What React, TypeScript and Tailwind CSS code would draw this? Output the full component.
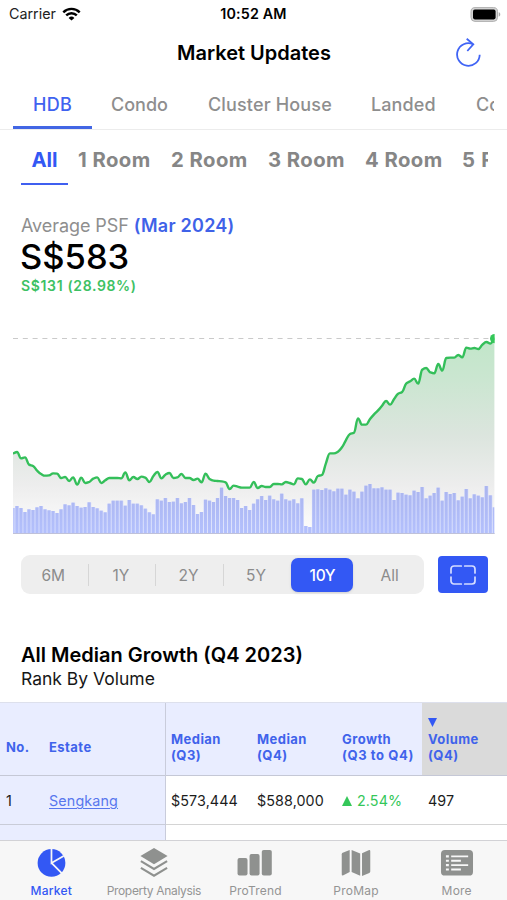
import React from "react";

// Chart samples are stored in thirds of a pixel, measured from the chart's top edge.
const PRICE = [
  400, 396, 415, 412, 434, 438, 452, 462, 467, 466, 460, 461, 474, 471, 483, 472, 494, 473, 489, 486, 476, 472, 489, 481,
  474, 474, 474, 475, 457, 481, 471, 477, 470, 473, 486, 468, 456, 475, 464, 459, 474, 472, 462, 474, 474, 480, 476, 487,
  461, 477, 482, 483, 484, 487, 507, 497, 500, 503, 503, 503, 486, 504, 498, 501, 501, 492, 492, 493, 486, 489, 493, 475,
  477, 493, 478, 488, 468, 465, 430, 400, 400, 395, 382, 360, 342, 338, 295, 314, 314, 297, 283, 271, 257, 243, 254, 237,
  221, 216, 191, 184, 176, 191, 149, 144, 157, 160, 132, 152, 114, 113, 113, 105, 112, 83, 86, 84, 87, 74, 66, 71, 56,
];
const VOLUME = [
  564, 558, 564, 576, 568, 570, 562, 558, 568, 571, 573, 579, 568, 553, 556, 548, 558, 563, 561, 547, 561, 565, 572, 577,
  551, 542, 542, 542, 557, 540, 551, 551, 556, 566, 577, 583, 538, 542, 534, 546, 545, 534, 550, 546, 534, 555, 582, 576,
  539, 542, 546, 534, 503, 528, 534, 534, 540, 564, 558, 570, 551, 538, 528, 540, 527, 538, 542, 521, 538, 542, 538, 550,
  535, 618, 621, 509, 508, 510, 505, 509, 514, 506, 506, 524, 509, 515, 535, 515, 497, 492, 505, 505, 502, 509, 509, 540,
  518, 519, 524, 526, 512, 516, 501, 535, 527, 519, 503, 542, 516, 522, 519, 541, 530, 507, 535, 523, 527, 532, 498, 526,
  562,
];
const STEP = 481.4 / 120;
const BASE = 213.7;

function smoothPath(values: number[]) {
  const y = values.map((v) => v / 3);
  const slope = y.map((_, i) => {
    if (i === 0 || i === y.length - 1) return 0;
    const a = y[i] - y[i - 1];
    const b = y[i + 1] - y[i];
    return a * b <= 0 ? 0 : (2 * a * b) / (a + b);
  });
  const k = 0.42;
  let d = `M0 ${y[0].toFixed(2)}`;
  for (let i = 1; i < y.length; i++) {
    const x0 = (i - 1) * STEP;
    const x1 = i * STEP;
    d += `C${(x0 + STEP * k).toFixed(2)} ${(y[i - 1] + slope[i - 1] * k).toFixed(2)} ${(x1 - STEP * k).toFixed(2)} ${(y[i] - slope[i] * k).toFixed(2)} ${x1.toFixed(2)} ${y[i].toFixed(2)}`;
  }
  return d;
}

function Chart() {
  const line = smoothPath(PRICE);
  return (
    <svg className="ml-[13px] block h-[220px] w-[482px] shrink-0" viewBox="0 0 482 220">
      <defs>
        <linearGradient id="area" x1="0" y1="18" x2="0" y2="214" gradientUnits="userSpaceOnUse">
          <stop offset="0" stopColor="#c1e6c9" />
          <stop offset="0.2" stopColor="#cae6d0" />
          <stop offset="0.5" stopColor="#dce5de" />
          <stop offset="0.75" stopColor="#ededed" />
          <stop offset="1" stopColor="#fdfdfd" />
        </linearGradient>
        <linearGradient id="bars" x1="0" y1="165" x2="0" y2="214" gradientUnits="userSpaceOnUse">
          <stop offset="0" stopColor="#abb5ee" />
          <stop offset="1" stopColor="#b3c0fd" />
        </linearGradient>
      </defs>
      <path d={`${line}L481.4 ${BASE}L0 ${BASE}Z`} fill="url(#area)" />
      <line x1="0" y1="18.5" x2="476" y2="18.5" stroke="#cacaca" strokeWidth="1" strokeDasharray="5 4.8" />
      {VOLUME.map((v, i) => {
        const left = Math.max(0, i * STEP - 2);
        const right = Math.min(481.6, i * STEP + 2);
        return (
          <g key={i}>
            <rect x={left} y={v / 3} width={right - left} height={BASE - v / 3} fill="#d4dbfd" />
            <rect x={left + 0.4} y={v / 3} width={right - left - 1} height={BASE - v / 3} fill="url(#bars)" />
          </g>
        );
      })}
      <line x1="0" y1="213.5" x2="481.6" y2="213.5" stroke="#bfc1d9" />
      <path d={line} fill="none" stroke="#34bf5a" strokeWidth="2.4" strokeLinejoin="round" />
      <path d="M481.6 14a4.6 4.6 0 0 0 0 9.2z" fill="#34c759" />
    </svg>
  );
}

function StatusBar() {
  return (
    <div className="grid h-[28px] shrink-0 grid-cols-[1fr_auto_1fr] items-center pl-[9px] pr-[6px] text-[14.3px]">
      <div className="flex items-center gap-[6px] text-[#222]">
        <span>Carrier</span>
        <svg className="h-[14px] w-[19px]" viewBox="0 0 19 14" fill="none" stroke="#000" strokeWidth="2.4">
          <path d="M1.3 5.3a11.6 11.6 0 0 1 16.4 0" />
          <path d="M4.2 8.4a7.5 7.5 0 0 1 10.6 0" />
          <path d="M9.5 13.6 6.6 10.9a4.1 4.1 0 0 1 5.8 0z" fill="#000" stroke="none" />
        </svg>
      </div>
      <div className="pr-[3px] text-center font-semibold tracking-[0.15px] whitespace-nowrap">10:52 AM</div>
      <svg className="h-[15px] w-[31px] justify-self-end" viewBox="0 0 31 15">
        <rect x="1" y="0.6" width="26.5" height="13.8" rx="4" fill="#d4d4d4" stroke="#b0b0b0" />
        <rect x="3" y="2.6" width="22.6" height="9.8" rx="1.8" fill="#000" />
        <path d="M28.7 5.3c2.1.5 2.1 3.9 0 4.4z" fill="#aaa" />
      </svg>
    </div>
  );
}

const RANGES = ["6M", "1Y", "2Y", "5Y", "10Y", "All"];

function RangePicker() {
  return (
    <div className="flex shrink-0 items-center pl-[21px]">
      <div className="flex h-[39px] w-[403px] items-center rounded-[9px] bg-[#eeeeee] text-[15.5px] text-[#8b8b8b]">
        {RANGES.map((r, i) => (
          <div
            key={r}
            className={
              i === 4
                ? "mr-[4px] ml-px flex h-[34px] w-[62px] items-center justify-center rounded-[7px] bg-[#3358f4] pt-[2px] font-medium tracking-[-0.4px] text-white shadow-sm"
                : "flex h-[22px] flex-1 items-center justify-center pt-[2px] pr-[2px] " + (i < 3 ? "border-r border-[#d6d6d6]" : "")
            }
          >
            {r}
          </div>
        ))}
      </div>
      <div className="ml-[14px] flex h-[37px] w-[50px] items-center justify-center rounded-[4px] bg-[#3358f4]">
        <svg className="h-[20px] w-[26px]" viewBox="0 0 26 20" fill="none" stroke="#d5dcff" strokeWidth="1.7" strokeLinecap="round">
          <path d="M1 8V4a3 3 0 0 1 3-3h7.3M14.7 1H22a3 3 0 0 1 3 3v4M25 12v4a3 3 0 0 1-3 3h-7.3M11.3 19H4a3 3 0 0 1-3-3v-4" />
        </svg>
      </div>
    </div>
  );
}

function GrowthTable() {
  const head =
    "flex h-[72px] flex-col justify-center text-[13px] leading-[16px] font-bold tracking-[0.45px] text-[#4063eb] whitespace-nowrap";
  return (
    <div className="mt-[12px] flex h-[138px] shrink-0 overflow-hidden border-t border-[#dde0ec] text-[14.3px] text-[#1c1c1c]">
      <div className="flex h-full w-[166px] flex-col border-r border-[#c9ccdb] bg-[#e9edff]">
        <div className="flex h-[73px] shrink-0 items-center border-b border-[#c5c8d6] pt-[17px] text-[13px] font-bold tracking-[0.45px] text-[#4063eb]">
          <span className="w-[49px] pl-[6px]">No.</span>
          <span>Estate</span>
        </div>
        <div className="flex h-[49px] shrink-0 items-center border-b border-[#c9ccd8] pt-[2px]">
          <span className="w-[49px] pl-[6px]">1</span>
          <span className="tracking-[0.15px] text-[#5877ee] underline underline-offset-2">Sengkang</span>
        </div>
      </div>
      <div className="flex flex-1 flex-col">
        <div className="grid shrink-0 grid-cols-[86px_85px_85px_1fr] border-b border-[#c5c8d6] bg-[#e9edff]">
          <div className={head + " pt-[15px] pl-[5px]"}>
            <span>Median</span>
            <span>(Q3)</span>
          </div>
          <div className={head + " pt-[15px] pl-[5px]"}>
            <span>Median</span>
            <span>(Q4)</span>
          </div>
          <div className={head + " pt-[15px] pl-[5px]"}>
            <span>Growth</span>
            <span className="tracking-[0.6px]">(Q3 to Q4)</span>
          </div>
          <div className={head + " bg-[#dadada] pt-[2px] pl-[6px]"}>
            <svg className="mb-[4px] h-[9px] w-[9px]" viewBox="0 0 9 9">
              <path d="M0 0h9L4.5 9z" fill="#3358f4" />
            </svg>
            <span>Volume</span>
            <span>(Q4)</span>
          </div>
        </div>
        <div className="grid h-[49px] shrink-0 grid-cols-[86px_85px_85px_1fr] items-center border-b border-[#d4d4d4] pt-[2px] tracking-[0.1px] *:pl-[5px]">
          <span>$573,444</span>
          <span>$588,000</span>
          <span className="flex items-center gap-[5px] text-[#34c759]">
            <svg className="h-[10px] w-[10px]" viewBox="0 0 10 10">
              <path d="M5 0l5 10H0z" fill="#34c759" />
            </svg>
            2.54%
          </span>
          <span className="ml-px">497</span>
        </div>
      </div>
    </div>
  );
}

function TabBar() {
  const item = "flex flex-1 flex-col items-center whitespace-nowrap";
  return (
    <nav className="flex h-[60px] shrink-0 border-t border-[#d2d2d6] bg-[#f7f7f7] pt-[5px] text-[12px] text-[#949494]">
      <div className={item + " pl-px text-[#3358f4]"}>
        <svg className="h-[34px] w-[36px]" viewBox="0 0 36 34">
          <circle cx="18.5" cy="17.5" r="14.3" fill="#3358f4" />
          <path d="M18.5 2.5v15L31 10.3M18.5 17.5 29 28" fill="none" stroke="#f7f7f7" strokeWidth="1.8" />
        </svg>
        <span className="mt-[3px] font-medium tracking-[0.2px]">Market</span>
      </div>
      <div className={item + " pl-[2px]"}>
        <svg className="h-[34px] w-[32px]" viewBox="0 0 32 34" fill="none" stroke="#8f918f" strokeWidth="2.2">
          <path d="M16 2 30 10.3 16 18.8 2 10.3z" fill="#8f918f" stroke="none" />
          <path d="m2.5 15.6 13.5 8 13.5-8M2.5 22.6l13.5 8 13.5-8" />
        </svg>
        <span className="mt-[3px] tracking-[-0.32px]">Property Analysis</span>
      </div>
      <div className={item + " pl-px"}>
        <svg className="h-[34px] w-[36px]" viewBox="0.8 0 36 34" fill="#8f918f">
          <rect x="0.8" y="12.3" width="10.3" height="18" rx="2" />
          <rect x="13.2" y="8.3" width="10.3" height="22" rx="2" />
          <rect x="25.8" y="4" width="10.3" height="26.3" rx="2" />
        </svg>
        <span className="mt-[3px] tracking-[0.2px]">ProTrend</span>
      </div>
      <div className={item}>
        <svg className="h-[34px] w-[30px]" viewBox="0 0 30 34" fill="#8f918f">
          <path d="M0.3 8.5Q.3 7.4 1.3 7L8.5 4.2v22.6L2 30.2Q.3 30.8.3 29z" />
          <path d="m10.5 4 8.8 3.6v23l-8.8-3.8z" />
          <path d="m21.2 7.4 6.8-3q1.7-.6 1.7 1v21q0 1-1 1.4l-7.5 3z" />
        </svg>
        <span className="mt-[3px] tracking-[0.25px]">ProMap</span>
      </div>
      <div className={item}>
        <svg className="h-[34px] w-[34px]" viewBox="0 0 34 34">
          <rect x="0.5" y="4" width="33" height="26.5" rx="4" fill="#8f918f" />
          <path d="M11 10.7h17.5M11 15.2h10M11 19.7h17.5M11 24.2h10" stroke="#f7f7f7" strokeWidth="1.9" />
          <path d="M5.6 10.7h3M5.6 15.2h3M5.6 19.7h3M5.6 24.2h3" stroke="#f7f7f7" strokeWidth="2.2" />
        </svg>
        <span className="mt-[3px] tracking-[0.2px]">More</span>
      </div>
    </nav>
  );
}

export default function App() {
  return (
    <div className="flex h-[900px] w-[507px] flex-col overflow-hidden bg-white font-['Inter',sans-serif] text-black">
      <StatusBar />
      <header className="grid h-[50px] shrink-0 grid-cols-[1fr_auto_1fr] items-center pr-[26px]">
        <h1 className="col-start-2 pl-[27px] text-[20px] font-semibold">Market Updates</h1>
        <svg className="h-[30px] w-[25px] justify-self-end" viewBox="0 0 25 30" fill="none" stroke="#4064f5" strokeWidth="1.8">
          <path d="M23.7 16.7A11.3 11.3 0 1 1 17 6.2" />
          <path d="M10.7.8 17.3 6.4 11.3 13" />
        </svg>
      </header>
      <div className="flex h-[52px] shrink-0 overflow-hidden border-b border-[#ececec] pl-[13px] pr-[13px] text-[18px] font-medium text-[#8e8e8e]">
        <div className="flex h-full w-full overflow-hidden whitespace-nowrap leading-[53px]">
          <span className="w-[79px] shrink-0 border-b-[3px] border-[#4266e4] text-center tracking-[0.3px] text-[#3f62f0]">HDB</span>
          <span className="ml-[19px] w-[97px] shrink-0">Condo</span>
          <span className="w-[163px] shrink-0 tracking-[0.15px]">Cluster House</span>
          <span className="w-[104px] shrink-0 tracking-[0.1px]">Landed</span>
          <span className="ml-px">Condo</span>
        </div>
      </div>
      <div className="flex h-[55px] shrink-0 overflow-hidden pr-[19px] pl-[21px] text-[20.3px] leading-[60px] font-bold tracking-[0.45px] whitespace-nowrap text-[#868686]">
        <div className="flex w-full overflow-hidden">
          <span className="w-[47px] shrink-0 border-b-[2px] border-[#3f5ff0] text-center tracking-[0px] text-[#3358f4]">All</span>
          <span className="ml-[10px] w-[93px] shrink-0">1 Room</span>
          <span className="w-[97px] shrink-0">2 Room</span>
          <span className="w-[97px] shrink-0">3 Room</span>
          <span className="w-[97px] shrink-0">4 Room</span>
          <span className="tracking-[0.7px]">5 Room</span>
        </div>
      </div>
      <section className="h-[135px] shrink-0 pt-[30px] pl-[21px]">
        <p className="text-[18px] leading-[22px] text-[#8e8e8e]">
          <span className="tracking-[-0.08px]">Average PSF</span>{" "}
          <span className="font-semibold tracking-[0.25px] text-[#3f62e8]">(Mar 2024)</span>
        </p>
        <p className="-ml-px text-[34.5px] leading-[40px] font-medium">S$583</p>
        <p className="text-[14px] leading-[18px] font-semibold tracking-[0.65px] text-[#3dc163]">S$131 (28.98%)</p>
      </section>
      <Chart />
      <div className="mt-[15px] flex shrink-0">
        <RangePicker />
      </div>
      <section className="mt-[49px] h-[47px] shrink-0 pl-[21px]">
        <h2 className="text-[20px] leading-[25px] font-semibold">All Median Growth (Q4 2023)</h2>
        <p className="text-[17.5px] leading-[22px] text-[#161616]">Rank By Volume</p>
      </section>
      <GrowthTable />
      <TabBar />
    </div>
  );
}
